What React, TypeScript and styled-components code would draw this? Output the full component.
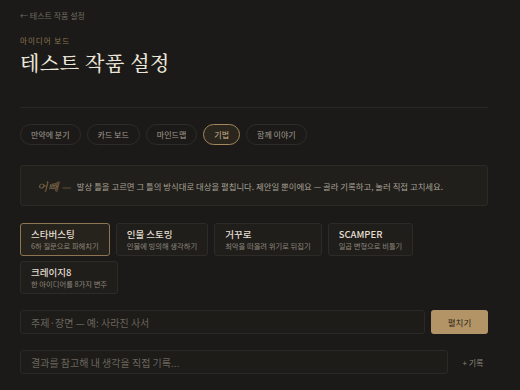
import { useState } from "react";
import styled, { createGlobalStyle } from "styled-components";

const GlobalStyle = createGlobalStyle`
  html, body {
    margin: 0;
    padding: 0;
    background: #1b1a18;
  }
  body {
    font-family: "Noto Sans CJK KR", "Noto Sans", sans-serif;
    color: #e6e0d4;
  }
`;

const TABS = ["만약에 분기", "카드 보드", "마인드맵", "기법", "함께 이야기"];

const METHODS = [
  { title: "스타버스팅", sub: "6하 질문으로 파헤치기" },
  { title: "인물 스토밍", sub: "인물에 빙의해 생각하기" },
  { title: "거꾸로", sub: "최악을 떠올려 위기로 뒤집기" },
  { title: "SCAMPER", sub: "일곱 변형으로 비틀기" },
  { title: "크레이지8", sub: "한 아이디어를 8가지 변주" },
];

export default function App() {
  const [tab, setTab] = useState("기법");
  const [method, setMethod] = useState("스타버스팅");
  const [topic, setTopic] = useState("");
  const [note, setNote] = useState("");

  return (
    <>
      <GlobalStyle />
      <Page>
        <BackLink>← 테스트 작품 설정</BackLink>
        <Kicker>아이디어 보드</Kicker>
        <Title>테스트 작품 설정</Title>
        <Divider />

        <TabRow>
          {TABS.map((t) => (
            <Tab key={t} $active={t === tab} onClick={() => setTab(t)}>
              {t}
            </Tab>
          ))}
        </TabRow>

        <Hint>
          <HintMark>어빼 —</HintMark>
          <HintText>
            발상 틀을 고르면 그 틀의 방식대로 대상을 펼칩니다. 제안일 뿐이에요 — 골라 기록하고, 눌러 직접 고치세요.
          </HintText>
        </Hint>

        <CardGrid>
          {METHODS.map((m) => (
            <MethodCard
              key={m.title}
              $active={m.title === method}
              onClick={() => setMethod(m.title)}
            >
              <CardTitle>{m.title}</CardTitle>
              <CardSub>{m.sub}</CardSub>
            </MethodCard>
          ))}
        </CardGrid>

        <InputRow>
          <Field
            placeholder="주제·장면 — 예: 사라진 사서"
            value={topic}
            onChange={(e) => setTopic(e.target.value)}
          />
          <PrimaryButton>펼치기</PrimaryButton>
        </InputRow>

        <NoteRow>
          <Field
            placeholder="결과를 참고해 내 생각을 직접 기록..."
            value={note}
            onChange={(e) => setNote(e.target.value)}
          />
          <GhostButton>+ 기록</GhostButton>
        </NoteRow>
      </Page>
    </>
  );
}

const Page = styled.div`
  width: 468px;
  padding: 10px 32px 0 20px;
`;

const BackLink = styled.div`
  font-size: 8px;
  line-height: 12px;
  color: #6f6a61;
`;

const Kicker = styled.div`
  margin-top: 14px;
  font-size: 7.5px;
  line-height: 10px;
  letter-spacing: 1px;
  color: #8f7650;
`;

const Title = styled.h1`
  margin: 3px 0 0;
  font-family: "Noto Serif CJK KR", "Liberation Serif", serif;
  font-size: 20px;
  line-height: 28px;
  font-weight: 500;
  letter-spacing: 0.5px;
  color: #ece6da;
`;

const Divider = styled.div`
  margin-top: 30px;
  height: 1px;
  background: #2a2825;
`;

const TabRow = styled.div`
  display: flex;
  gap: 6px;
  margin-top: 16px;
`;

const Tab = styled.button<{ $active: boolean }>`
  height: 21px;
  padding: 0 10px;
  border-radius: 11px;
  border: 1px solid ${(p) => (p.$active ? "#a4875c" : "#2e2c28")};
  background: ${(p) => (p.$active ? "#2a251d" : "transparent")};
  color: ${(p) => (p.$active ? "#c9b48e" : "#a39d92")};
  font-family: inherit;
  font-size: 8px;
  cursor: pointer;
`;

const Hint = styled.div`
  display: flex;
  align-items: center;
  gap: 6px;
  margin-top: 20px;
  height: 41px;
  box-sizing: border-box;
  padding: 0 16px;
  background: #211f1b;
  border: 1px solid #2c2a25;
  border-radius: 3px;
`;

const HintMark = styled.span`
  font-family: "Noto Serif CJK KR", "Liberation Serif", serif;
  font-style: italic;
  font-size: 11px;
  color: #8f7650;
  white-space: nowrap;
`;

const HintText = styled.span`
  font-size: 8.4px;
  color: #a8a297;
  white-space: nowrap;
`;

const CardGrid = styled.div`
  display: flex;
  flex-wrap: wrap;
  gap: 5px 6px;
  margin-top: 17px;
  width: 420px;
`;

const MethodCard = styled.button<{ $active: boolean }>`
  display: flex;
  flex-direction: column;
  align-items: flex-start;
  justify-content: center;
  height: 33px;
  padding: 0 10px;
  border-radius: 3px;
  border: 1px solid ${(p) => (p.$active ? "#8d7552" : "#2d2b27")};
  background: ${(p) => (p.$active ? "#26221c" : "#201e1b")};
  font-family: inherit;
  text-align: left;
  cursor: pointer;
`;

const CardTitle = styled.span`
  font-size: 9.5px;
  line-height: 13px;
  font-weight: 500;
  color: #e2dccf;
`;

const CardSub = styled.span`
  font-size: 7.3px;
  line-height: 10px;
  color: #8c867b;
  white-space: nowrap;
`;

const InputRow = styled.div`
  display: flex;
  gap: 6px;
  margin-top: 16px;
`;

const NoteRow = styled.div`
  display: flex;
  align-items: center;
  gap: 10px;
  margin-top: 16px;
`;

const Field = styled.input`
  flex: 1;
  height: 24px;
  box-sizing: border-box;
  padding: 0 10px;
  border: 1px solid #2b2926;
  border-radius: 3px;
  background: #1d1c19;
  color: #e6e0d4;
  font-family: inherit;
  font-size: 10px;
  outline: none;
  &::placeholder {
    color: #6a655d;
  }
`;

const PrimaryButton = styled.button`
  width: 57px;
  height: 24px;
  border: none;
  border-radius: 3px;
  background: #b39466;
  color: #2a2319;
  font-family: inherit;
  font-size: 8.5px;
  cursor: pointer;
`;

const GhostButton = styled.button`
  padding: 0;
  width: 30px;
  border: none;
  background: transparent;
  color: #8b857a;
  font-family: inherit;
  font-size: 8px;
  cursor: pointer;
`;
